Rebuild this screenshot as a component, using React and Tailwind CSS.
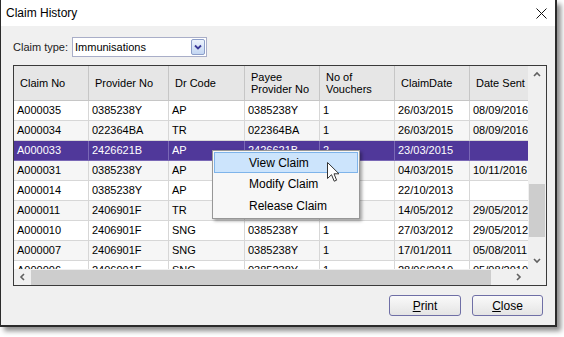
import React from "react";

const colW = ["w-[75px]", "w-[80px]", "w-[76px]", "w-[75px]", "w-[75px]", "w-[75px]", "w-[75px]"];

const rows = [
  ["A000035", "0385238Y", "AP", "0385238Y", "1", "26/03/2015", "08/09/2016"],
  ["A000034", "022364BA", "TR", "022364BA", "1", "26/03/2015", "08/09/2016"],
  ["A000033", "2426621B", "AP", "2426621B", "2", "23/03/2015", ""],
  ["A000031", "0385238Y", "AP", "0385238Y", "1", "04/03/2015", "10/11/2016"],
  ["A000014", "0385238Y", "AP", "0385238Y", "1", "22/10/2013", ""],
  ["A000011", "2406901F", "TR", "2406901F", "1", "14/05/2012", "29/05/2012"],
  ["A000010", "2406901F", "SNG", "0385238Y", "1", "27/03/2012", "29/05/2012"],
  ["A000007", "2406901F", "SNG", "0385238Y", "1", "17/01/2011", "05/08/2011"],
  ["A000006", "2406901F", "SNG", "0385238Y", "1", "28/06/2010", "05/08/2010"],
];

const Chevron = ({ dir }) => {
  const d = {
    up: "M1 5 L4 2 L7 5",
    down: "M1 2 L4 5 L7 2",
    left: "M5 1 L2 4 L5 7",
    right: "M2 1 L5 4 L2 7",
  }[dir];
  return (
    <svg width="8" height="8" viewBox="0 0 8 8">
      <path d={d} fill="none" stroke="#606060" strokeWidth="1.6" />
    </svg>
  );
};

const App = () => {
  return (
    <div
      className="w-[564px] h-[337px] bg-white relative overflow-hidden text-black"
      style={{ fontFamily: '"Liberation Sans", Arial, sans-serif' }}
    >
      {/* Window */}
      <div className="w-[557px] h-[327px] flex flex-col bg-[#f0f0f0] border-l border-r-2 border-b-2 border-[#2b2b2b] shadow-[4px_4px_5px_rgba(0,0,0,0.45)]">
        {/* Title bar */}
        <div className="h-[26px] bg-white flex items-center justify-between pl-[5px] pr-[8px]">
          <span className="text-[12px]">Claim History</span>
          <svg width="11" height="11" viewBox="0 0 11 11">
            <path d="M0.5 0.5 L10.5 10.5 M10.5 0.5 L0.5 10.5" stroke="#111" strokeWidth="1" />
          </svg>
        </div>

        {/* Body */}
        <div className="flex-1 flex flex-col pl-[12px] pr-[9px] pt-[11px]">
          <div className="flex items-center h-[20px]">
            <span className="text-[11px] text-[#222] w-[59px]">Claim type:</span>
            <div className="w-[135px] h-[20px] bg-white border border-[#a9aec8] flex items-center justify-between pl-[2px] pr-[1px]">
              <span className="text-[11px]">Immunisations</span>
              <div className="w-[14px] h-[16px] rounded-[2px] border border-[#8c9ec9] bg-gradient-to-b from-[#eef4fd] to-[#c3d6f2] flex items-center justify-center">
                <svg width="8" height="6" viewBox="0 0 8 6">
                  <path d="M1 1.5 L4 4.5 L7 1.5" fill="none" stroke="#3b3a98" strokeWidth="1.8" />
                </svg>
              </div>
            </div>
          </div>

          {/* Grid */}
          <div className="mt-[8px] w-[534px] h-[221px] border border-[#3a3a3a] bg-white flex flex-col">
            <div className="flex h-[203px]">
              <div className="w-[514px] overflow-hidden">
                <div className="w-[531px]">
                  <div className="flex h-[35px] bg-[#e6e6e6] text-[11px] leading-[12px]">
                    {["Claim No", "Provider No", "Dr Code", "Payee\nProvider No", "No of\nVouchers", "ClaimDate", "Date Sent"].map((h, i) => (
                      <div
                        key={i}
                        className={`${colW[i]} shrink-0 flex items-center px-[6px] border-r border-b border-[#c6c6c6] whitespace-pre-line`}
                      >
                        {h}
                      </div>
                    ))}
                  </div>
                  {rows.map((r, ri) => {
                    const sel = ri === 2;
                    const bg = sel ? "bg-[#50389a] text-white" : ri % 2 === 1 ? "bg-[#f6f6f6]" : "bg-white";
                    return (
                      <div key={ri} className={`flex h-[20px] text-[11px] ${bg}`}>
                        {r.map((c, ci) => (
                          <div
                            key={ci}
                            className={`${colW[ci]} shrink-0 flex items-center px-[3px] border-r border-b ${sel ? "border-[#7a68b6]" : "border-[#d7d7d7]"}`}
                          >
                            {c}
                          </div>
                        ))}
                      </div>
                    );
                  })}
                </div>
              </div>
              {/* Vertical scrollbar */}
              <div className="w-[18px] bg-[#f0f0f0] flex flex-col items-center">
                <div className="h-[17px] flex items-center justify-center">
                  <Chevron dir="up" />
                </div>
                <div className="flex-1 w-full px-[1px] pt-[101px] pb-[15px]">
                  <div className="h-[53px] w-full bg-[#cdcdcd]" />
                </div>
                <div className="h-[17px] flex items-center justify-center">
                  <Chevron dir="down" />
                </div>
              </div>
            </div>
            {/* Horizontal scrollbar */}
            <div className="flex h-[16px]">
              <div className="w-[514px] bg-[#f0f0f0] flex items-center">
                <div className="w-[17px] flex items-center justify-center">
                  <Chevron dir="left" />
                </div>
                <div className="w-[460px] h-[15px] bg-[#cdcdcd]" />
                <div className="flex-1 flex items-center justify-end pr-[5px]">
                  <Chevron dir="right" />
                </div>
              </div>
              <div className="flex-1 bg-[#f0f0f0]" />
            </div>
          </div>

          {/* Buttons */}
          <div className="mt-[9px] flex justify-end gap-[11px] pr-[3px]">
            <button className="w-[72px] h-[21px] rounded-[3px] border border-[#6f6fa6] bg-gradient-to-b from-[#fafafa] to-[#e4e4e4] text-[12px]">
              <span className="underline">P</span>rint
            </button>
            <button className="w-[71px] h-[21px] rounded-[3px] border border-[#6f6fa6] bg-gradient-to-b from-[#fafafa] to-[#e4e4e4] text-[12px]">
              <span className="underline">C</span>lose
            </button>
          </div>
        </div>
      </div>

      {/* Context menu */}
      <div className="absolute left-[212px] top-[150px] w-[148px] h-[69px] bg-[#f7f7f7] border border-[#979797] shadow-[2px_2px_3px_rgba(0,0,0,0.35)] p-[1px] text-[12px]">
        <div className="h-[21px] flex items-center pl-[34px] bg-[#cce4fc] border border-[#7eb4ea]">View Claim</div>
        <div className="h-[22px] flex items-center pl-[35px]">Modify Claim</div>
        <div className="h-[22px] flex items-center pl-[35px]">Release Claim</div>
      </div>

      {/* Cursor */}
      <svg className="absolute left-[327px] top-[162px]" width="13" height="21" viewBox="0 0 13 21">
        <path d="M0.5 0.5 L0.5 16.5 L4.5 12.7 L7.2 19.2 L9.6 18.2 L7 11.8 L12 11.8 Z" fill="#fff" stroke="#333" strokeWidth="1" />
      </svg>
    </div>
  );
};

export default App;
